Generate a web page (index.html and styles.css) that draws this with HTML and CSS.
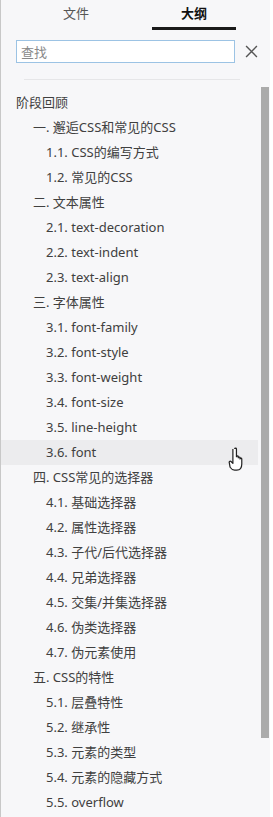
FILE: index.html
```html
<!DOCTYPE html>
<html lang="zh">
<head>
<meta charset="utf-8">
<link rel="stylesheet" href="styles.css">
</head>
<body>
<div class="panel">
  <div class="tabs">
    <div class="tab">文件</div>
    <div class="tab active">大纲</div>
  </div>
  <div class="search">
    <div class="input">查找</div>
    <svg class="close" width="13" height="13" viewBox="0 0 12 12"><path d="M1 1L11 11M11 1L1 11" stroke="#555" stroke-width="1.3" fill="none"/></svg>
  </div>
  <div class="divider"></div>
  <div class="body">
    <ul class="outline">
      <li class="l0">阶段回顾</li>
      <li class="l1">一. 邂逅CSS和常见的CSS</li>
      <li class="l2">1.1. CSS的编写方式</li>
      <li class="l2">1.2. 常见的CSS</li>
      <li class="l1">二. 文本属性</li>
      <li class="l2">2.1. text-decoration</li>
      <li class="l2">2.2. text-indent</li>
      <li class="l2">2.3. text-align</li>
      <li class="l1">三. 字体属性</li>
      <li class="l2">3.1. font-family</li>
      <li class="l2">3.2. font-style</li>
      <li class="l2">3.3. font-weight</li>
      <li class="l2">3.4. font-size</li>
      <li class="l2">3.5. line-height</li>
      <li class="l2 hover">3.6. font
        <svg class="cursor" width="18" height="24" viewBox="0 0 18 24"><path d="M6 2.5c0-1 1.6-1 1.6 0v7c0-1 1.6-1 1.6 0v1c0-1 1.6-1 1.6 0v1c0-1 1.6-1 1.6 0v4.5c0 3-1.5 5.5-4.5 5.5h-2c-2 0-3-1-4-2.5L1.2 15c-.6-1 .6-2 1.5-1.2L4.4 15.5V2.5" fill="#fff" stroke="#222" stroke-width="1.1" stroke-linejoin="round"/></svg>
      </li>
      <li class="l1">四. CSS常见的选择器</li>
      <li class="l2">4.1. 基础选择器</li>
      <li class="l2">4.2. 属性选择器</li>
      <li class="l2">4.3. 子代/后代选择器</li>
      <li class="l2">4.4. 兄弟选择器</li>
      <li class="l2">4.5. 交集/并集选择器</li>
      <li class="l2">4.6. 伪类选择器</li>
      <li class="l2">4.7. 伪元素使用</li>
      <li class="l1">五. CSS的特性</li>
      <li class="l2">5.1. 层叠特性</li>
      <li class="l2">5.2. 继承性</li>
      <li class="l2">5.3. 元素的类型</li>
      <li class="l2">5.4. 元素的隐藏方式</li>
      <li class="l2">5.5. overflow</li>
    </ul>
    <div class="scrollbar"><div class="thumb"></div></div>
  </div>
</div>
</body>
</html>
```
FILE: styles.css
```css
* { box-sizing: border-box; }
html, body { margin: 0; padding: 0; }
body {
  width: 273px;
  height: 817px;
  overflow: hidden;
  background: #f7f7f9;
  font-family: "Noto Sans", "Noto Sans CJK SC", sans-serif;
  color: #404040;
}
.panel {
  height: 817px;
  border-left: 1px solid #c8c8c8;
  border-right: 3px solid #ffffff;
  background: #f7f7f9;
}
.tabs {
  display: flex;
  height: 30px;
  padding-left: 16px;
}
.tab {
  width: 118px;
  text-align: center;
  font-size: 13px;
  line-height: 26px;
  color: #555;
  font-family: "Noto Sans CJK SC", sans-serif;
}
.tab.active {
  color: #111;
  font-weight: 700;
  width: 84px;
  margin-left: 17px;
  border-bottom: 3px solid #1a1a1a;
}
.search {
  display: flex;
  align-items: flex-start;
  padding: 10px 0 0 15px;
}
.input {
  width: 219px;
  height: 23px;
  border: 1px solid #9cc3e4;
  background: #fff;
  font-size: 13px;
  line-height: 21px;
  padding-left: 4px;
  color: #888;
  font-family: "Noto Sans CJK SC", sans-serif;
}
.close { margin: 5px 0 0 10px; }
.divider {
  height: 1px;
  background: #e6e6e8;
  margin: 16px 30px 0 23px;
}
.body {
  position: relative;
  display: flex;
}
.outline {
  list-style: none;
  margin: 10px 0 0 0;
  padding: 0;
  flex: 1;
}
.outline li {
  position: relative;
  height: 25px;
  line-height: 25px;
  font-size: 13px;
  white-space: nowrap;
}
.l0 { padding-left: 15px; }
.l1 { padding-left: 32px; }
.l2 { padding-left: 45px; }
.hover { background: #ececee; margin-right: 3px; }
.cursor {
  position: absolute;
  left: 227px;
  top: 6px;
  width: 20px;
  height: 27px;
}
.scrollbar {
  width: 8px;
  margin-top: 7px;
  margin-right: 1px;
}
.thumb {
  width: 8px;
  height: 651px;
  background: #ababab;
}
```
